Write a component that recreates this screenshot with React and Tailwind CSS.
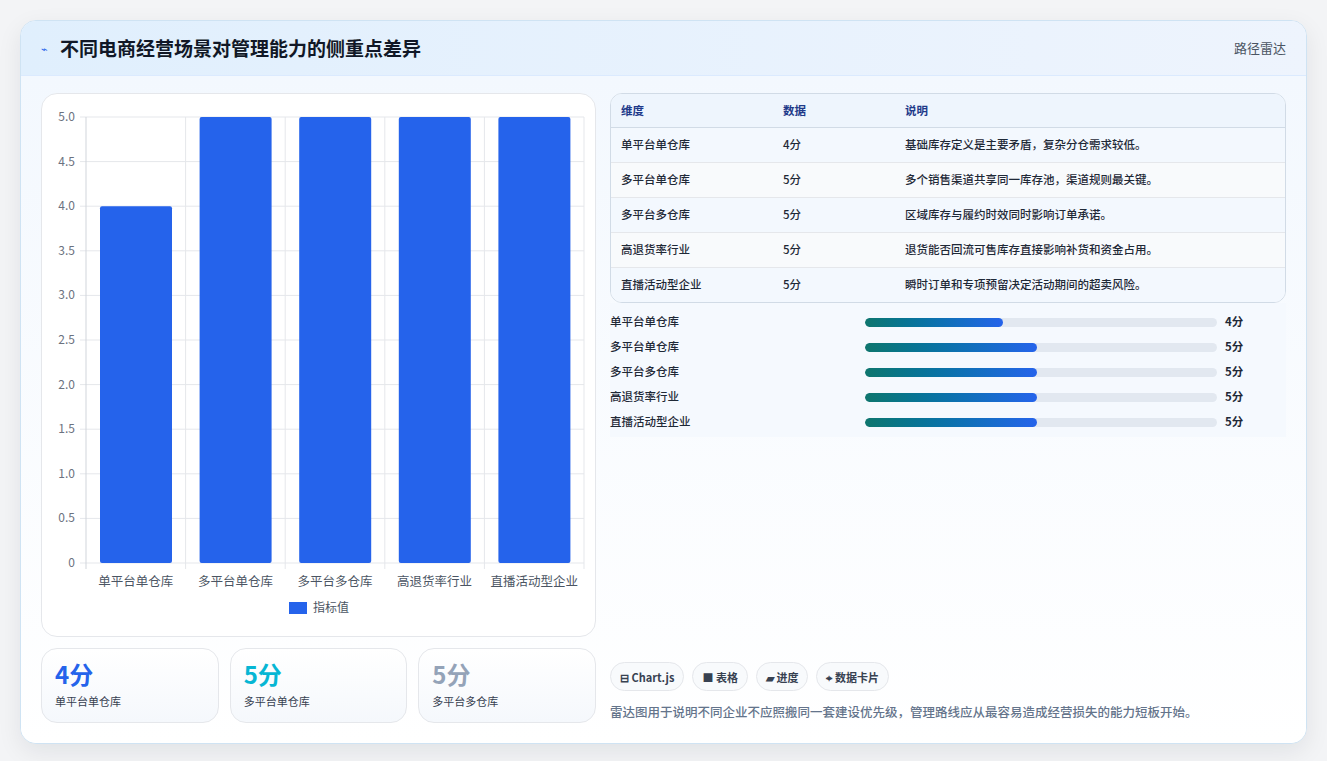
import React from 'react';

const rows = [
  { name: '单平台单仓库', score: 4, desc: '基础库存定义是主要矛盾，复杂分仓需求较低。' },
  { name: '多平台单仓库', score: 5, desc: '多个销售渠道共享同一库存池，渠道规则最关键。' },
  { name: '多平台多仓库', score: 5, desc: '区域库存与履约时效同时影响订单承诺。' },
  { name: '高退货率行业', score: 5, desc: '退货能否回流可售库存直接影响补货和资金占用。' },
  { name: '直播活动型企业', score: 5, desc: '瞬时订单和专项预留决定活动期间的超卖风险。' },
];

const font = { fontFamily: '"Noto Sans CJK SC", "Liberation Sans", sans-serif' };

function BarChart() {
  // card-local coords: plot 44..542 x, 23..469 y
  const L = 44, R = 542, T = 23, B = 469;
  const cw = (R - L) / 5;
  const ticks = [0, 0.5, 1, 1.5, 2, 2.5, 3, 3.5, 4, 4.5, 5];
  const y = (v) => B - (v / 5) * (B - T);
  return (
    <svg width="555" height="543" className="block" style={font}>
      {ticks.map((t) => (
        <g key={t}>
          <line x1={L - 6} x2={R} y1={y(t)} y2={y(t)} stroke="#e5e7eb" />
          <text x={L - 11} y={y(t) + 4} textAnchor="end" fontSize="12" fill="#6b7280">{t.toFixed(t === 0 ? 0 : 1)}</text>
        </g>
      ))}
      {[0, 1, 2, 3, 4, 5].map((i) => (
        <line key={i} x1={L + i * cw} x2={L + i * cw} y1={T} y2={B + 6} stroke={i === 0 ? '#d1d5db' : '#e5e7eb'} />
      ))}
      {rows.map((r, i) => (
        <g key={r.name}>
          <rect x={L + i * cw + 14} y={y(r.score)} width={72} height={B - y(r.score)} rx="2" fill="#2563eb" />
          <text x={L + i * cw + cw / 2} y={B + 23} textAnchor="middle" fontSize="12.5" fill="#4b5563">{r.name}</text>
        </g>
      ))}
      <rect x={247} y={508} width={18} height={12} fill="#2563eb" />
      <text x={271} y={518} fontSize="12" fill="#4b5563">指标值</text>
    </svg>
  );
}

export default function App() {
  return (
    <div className="min-h-screen bg-[#f3f4f6] p-5" style={font}>
      <div className="rounded-2xl border border-[#cfe3f3] bg-white shadow-[0_8px_24px_rgba(15,23,42,0.08)] overflow-hidden">
        <div className="flex items-center justify-between h-[55px] px-5 border-b border-[#dbeafe] bg-gradient-to-r from-[#e0effd] to-[#eef4fd]">
          <div className="flex items-center gap-3">
            <span className="text-[11px] text-[#2563eb]">⌁</span>
            <h1 className="text-[19px] font-bold text-[#111827]">不同电商经营场景对管理能力的侧重点差异</h1>
          </div>
          <span className="text-[13px] text-[#4b5563]">路径雷达</span>
        </div>
        <div className="flex gap-[14px] p-5 pt-[17px] bg-gradient-to-b from-[#f3f8fe] to-white">
          <div className="w-[555px] flex flex-col gap-[11px]">
            <div className="rounded-2xl border border-[#e5e7eb] bg-white h-[544px]">
              <BarChart />
            </div>
            <div className="grid grid-cols-3 gap-[11px]">
              {[
                ['4分', '单平台单仓库', 'text-[#2563eb]'],
                ['5分', '多平台单仓库', 'text-[#06b6d4]'],
                ['5分', '多平台多仓库', 'text-[#94a3b8]'],
              ].map(([v, l, c]) => (
                <div key={l} className="h-[75px] rounded-2xl border border-[#e5e7eb] bg-gradient-to-b from-white to-[#f5f8fc] px-[13px] pt-[9px]">
                  <div className={`text-[24px] font-bold leading-[32px] ${c}`}>{v}</div>
                  <div className="text-[11px] text-[#374151] mt-[3px]">{l}</div>
                </div>
              ))}
            </div>
          </div>
          <div className="flex-1 flex flex-col">
            <div className="rounded-xl border border-[#d1dbe6] overflow-hidden bg-white">
              <table className="w-full text-[11.5px]">
                <thead>
                  <tr className="bg-[#eef5fd] text-[#1e3a8a] font-bold h-[33px] border-b border-[#d1dbe6]">
                    <th className="text-left pl-[10px] w-[172px] font-bold">维度</th>
                    <th className="text-left w-[122px] font-bold">数据</th>
                    <th className="text-left font-bold">说明</th>
                  </tr>
                </thead>
                <tbody>
                  {rows.map((r, i) => (
                    <tr key={r.name} className={`h-[35px] text-[#1f2937] font-medium ${i < 4 ? 'border-b border-[#e5e7eb]' : ''} ${i % 2 ? 'bg-[#f8fafc]' : 'bg-[#f3f8fe]'}`}>
                      <td className="pl-[10px]">{r.name}</td>
                      <td>{r.score}分</td>
                      <td>{r.desc}</td>
                    </tr>
                  ))}
                </tbody>
              </table>
            </div>
            <div className="flex flex-col gap-[9px] pt-[11px] pb-[7px] bg-[#f5f9fe]">
              {rows.map((r) => (
                <div key={r.name} className="flex items-center h-[16px] text-[11.5px] font-medium text-[#1f2937]">
                  <span className="w-[255px]">{r.name}</span>
                  <div className="w-[352px] h-[9px] rounded-full bg-[#e2e8f0] overflow-hidden">
                    <div className="h-full rounded-full bg-gradient-to-r from-[#0f766e] to-[#2563eb]" style={{ width: `${(r.score / 5) * 49}%` }} />
                  </div>
                  <span className="ml-2 font-bold">{r.score}分</span>
                </div>
              ))}
            </div>
            <div className="flex-1" />
            <div className="flex gap-2 text-[11px] font-bold text-[#374151]">
              {['⊟ Chart.js', '■ 表格', '▰ 进度', '⌖ 数据卡片'].map((t) => (
                <span key={t} className="h-[29px] px-[9px] flex items-center rounded-full border border-[#e5e7eb] bg-[#f8fafc]">{t}</span>
              ))}
            </div>
            <p className="mt-[12px] mb-[1px] text-[12.5px] font-medium text-[#64748b]">雷达图用于说明不同企业不应照搬同一套建设优先级，管理路线应从最容易造成经营损失的能力短板开始。</p>
          </div>
        </div>
      </div>
    </div>
  );
}
